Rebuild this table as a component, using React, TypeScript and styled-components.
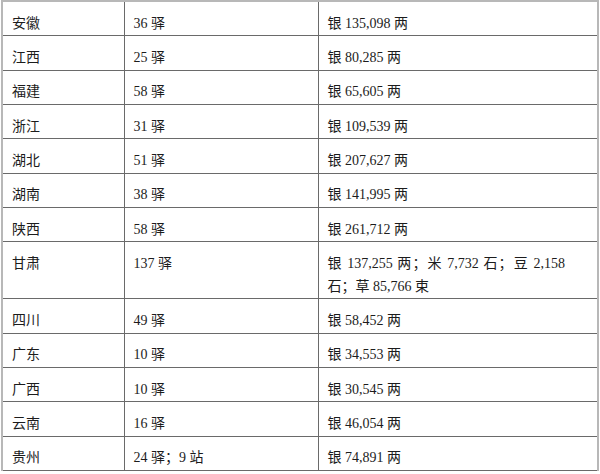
import React from "react";
import styled, { createGlobalStyle } from "styled-components";

const GlobalStyle = createGlobalStyle`
  html, body {
    margin: 0;
    background: #ffffff;
  }
  body {
    font-family: "Liberation Serif", "Noto Sans CJK SC", serif;
    font-size: 14px;
    color: #1c1c1c;
  }
`;

const Table = styled.table`
  margin: 0 0 0 1px;
  width: 596px;
  border-collapse: collapse;
  table-layout: fixed;
  border-top: 2px solid #b8b8b8;
  border-left: 2px solid #b8b8b8;
  border-right: 2px solid #b8b8b8;
  border-bottom: 1px solid #6a6a6a;
`;

const Col = styled.col<{ $width: number }>`
  width: ${(p) => p.$width}px;
`;

const Cell = styled.td<{ $wide?: boolean }>`
  border: 1px solid #6a6a6a;
  padding: 10.67px ${(p) => (p.$wide ? "32px" : "9px")} 0 9px;
  line-height: 22.67px;
  vertical-align: top;
  text-align: justify;
  word-break: normal;
`;

type Row = { province: string; count: string; goods: string };

const rows: Row[] = [
  { province: "安徽", count: "36 驿", goods: "银 135,098 两" },
  { province: "江西", count: "25 驿", goods: "银 80,285 两" },
  { province: "福建", count: "58 驿", goods: "银 65,605 两" },
  { province: "浙江", count: "31 驿", goods: "银 109,539 两" },
  { province: "湖北", count: "51 驿", goods: "银 207,627 两" },
  { province: "湖南", count: "38 驿", goods: "银 141,995 两" },
  { province: "陕西", count: "58 驿", goods: "银 261,712 两" },
  {
    province: "甘肃",
    count: "137 驿",
    goods: "银 137,255 两；米 7,732 石；豆 2,158 石；草 85,766 束",
  },
  { province: "四川", count: "49 驿", goods: "银 58,452 两" },
  { province: "广东", count: "10 驿", goods: "银 34,553 两" },
  { province: "广西", count: "10 驿", goods: "银 30,545 两" },
  { province: "云南", count: "16 驿", goods: "银 46,054 两" },
  { province: "贵州", count: "24 驿；9 站", goods: "银 74,891 两" },
];

export default function App() {
  return (
    <>
      <GlobalStyle />
      <Table>
        <colgroup>
          <Col $width={122} />
          <Col $width={194} />
          <Col $width={280} />
        </colgroup>
        <tbody>
          {rows.map((r) => (
            <tr key={r.province}>
              <Cell>{r.province}</Cell>
              <Cell>{r.count}</Cell>
              <Cell $wide>{r.goods}</Cell>
            </tr>
          ))}
        </tbody>
      </Table>
    </>
  );
}
